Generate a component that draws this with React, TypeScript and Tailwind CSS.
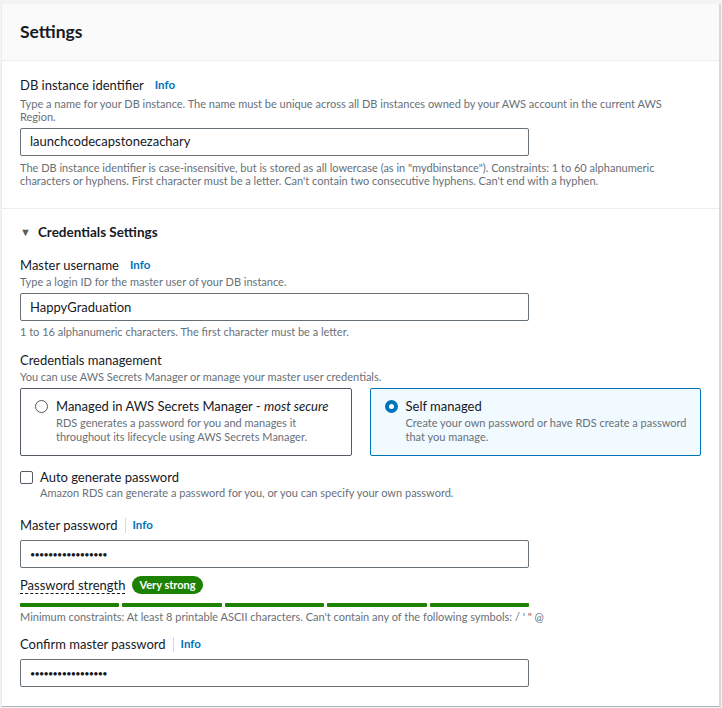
const font = { fontFamily: "Lato, 'Liberation Sans', sans-serif" };

function Info() {
  return <span className="text-[11.5px] font-bold text-[#0073bb]">Info</span>;
}

function Label({ text, divider = false }: { text: string; divider?: boolean }) {
  return (
    <div className="flex items-center text-[13px] leading-[20px] text-[#16191f]">
      <span>{text}</span>
      {divider ? (
        <span className="mx-[7px] h-[15px] w-px bg-[#d5dbdb]" />
      ) : (
        <span className="w-[11px]" />
      )}
      <Info />
    </div>
  );
}

function Hint({ children }: { children: React.ReactNode }) {
  return <p className="text-[11px] leading-[13px] text-[#687078]">{children}</p>;
}

function TextBox({ value }: { value: string }) {
  return (
    <div className="flex h-[28px] w-[509px] items-center rounded-[2px] border border-[#687078] bg-white px-[9px] text-[13px] text-[#16191f]">
      {value}
    </div>
  );
}

function Dots() {
  return (
    <div className="flex h-[28px] w-[509px] items-center rounded-[2px] border border-[#687078] bg-white px-[9px]">
      <span className="text-[9px] tracking-[-0.7px] text-[#16191f]">•••••••••••••••••</span>
    </div>
  );
}

export default function App() {
  return (
    <div style={font} className="min-h-[708px] bg-[#f2f3f3] pt-[4px] pl-[1px] pr-[1px]">
      <div className="border-l border-[#eaeded] border-r-2 border-r-[#d5dbdb] border-b border-b-[#aab7b8] bg-white">
        <div className="flex h-[57px] items-center border-b border-[#eaeded] bg-[#fafafa] px-[18px]">
          <h2 className="text-[17.5px] font-bold text-[#16191f]">Settings</h2>
        </div>

        <div className="px-[18px] pt-[14px] pb-[21px]">
          <Label text="DB instance identifier" />
          <div className="mt-[2px] w-[650px]">
            <Hint>
              Type a name for your DB instance. The name must be unique across all DB instances owned by your AWS account in the current AWS Region.
            </Hint>
          </div>
          <div className="mt-[5px]">
            <TextBox value="launchcodecapstonezachary" />
          </div>
          <div className="mt-[5px] w-[650px]">
            <Hint>
              The DB instance identifier is case-insensitive, but is stored as all lowercase (as in "mydbinstance"). Constraints: 1 to 60 alphanumeric characters or hyphens. First character must be a letter. Can't contain two consecutive hyphens. Can't end with a hyphen.
            </Hint>
          </div>
        </div>

        <div className="border-t border-[#eaeded] px-[18px] pt-[13px] pb-[19px]">
          <div className="flex items-center gap-[7px] text-[13.5px] font-bold text-[#16191f]">
            <span className="text-[11px] text-[#545b64]">▼</span>
            <span>Credentials Settings</span>
          </div>

          <div className="mt-[13px]">
            <Label text="Master username" />
            <div>
              <Hint>Type a login ID for the master user of your DB instance.</Hint>
            </div>
            <div className="mt-[5px]">
              <TextBox value="HappyGraduation" />
            </div>
            <div className="mt-[4px]">
              <Hint>1 to 16 alphanumeric characters. The first character must be a letter.</Hint>
            </div>
          </div>

          <div className="mt-[12px]">
            <div className="text-[13px] leading-[20px] text-[#16191f]">Credentials management</div>
            <div>
              <Hint>You can use AWS Secrets Manager or manage your master user credentials.</Hint>
            </div>
            <div className="mt-[5px] grid grid-cols-2 gap-[18px]">
              <div className="flex h-[68px] gap-[8px] rounded-[2px] border border-[#545b64] px-[14px] pt-[8px]">
                <span className="mt-[3px] h-[13px] w-[13px] shrink-0 rounded-full border border-[#545b64]" />
                <div>
                  <div className="text-[13px] leading-[18px] text-[#16191f]">
                    Managed in AWS Secrets Manager - <i>most secure</i>
                  </div>
                  <div className="mt-[1px] w-[262px] text-[11px] leading-[14px] text-[#687078]">
                    RDS generates a password for you and manages it throughout its lifecycle using AWS Secrets Manager.
                  </div>
                </div>
              </div>
              <div className="flex h-[68px] gap-[8px] rounded-[2px] border border-[#0073bb] bg-[#f1faff] px-[14px] pt-[8px]">
                <span className="mt-[3px] flex h-[13px] w-[13px] shrink-0 items-center justify-center rounded-full bg-[#0073bb]">
                  <span className="h-[5px] w-[5px] rounded-full bg-white" />
                </span>
                <div>
                  <div className="text-[13px] leading-[18px] text-[#16191f]">Self managed</div>
                  <div className="mt-[1px] w-[288px] text-[11px] leading-[14px] text-[#687078]">
                    Create your own password or have RDS create a password that you manage.
                  </div>
                </div>
              </div>
            </div>
          </div>

          <div className="mt-[13px] flex gap-[7px]">
            <span className="mt-[2px] h-[13px] w-[13px] shrink-0 rounded-[2px] border border-[#545b64]" />
            <div>
              <div className="text-[13px] leading-[16px] text-[#16191f]">Auto generate password</div>
              <div className="mt-[1px]">
                <Hint>Amazon RDS can generate a password for you, or you can specify your own password.</Hint>
              </div>
            </div>
          </div>

          <div className="mt-[16px]">
            <Label text="Master password" divider />
            <div className="mt-[5px]">
              <Dots />
            </div>
            <div className="mt-[8px] flex items-center gap-[7px]">
              <span className="border-b border-dashed border-[#16191f] text-[13px] leading-[16px] text-[#16191f]">
                Password strength
              </span>
              <span className="rounded-full bg-[#1d8102] px-[7px] text-[11px] font-bold leading-[18px] text-white">
                Very strong
              </span>
            </div>
            <div className="mt-[9px] grid w-[509px] grid-cols-5 gap-[3px]">
              {[0, 1, 2, 3, 4].map((i) => (
                <span key={i} className="h-[4px] rounded-[1px] bg-[#1d8102]" />
              ))}
            </div>
            <div className="mt-[3px]">
              <Hint>Minimum constraints: At least 8 printable ASCII characters. Can't contain any of the following symbols: / ' " @</Hint>
            </div>
          </div>

          <div className="mt-[11px]">
            <Label text="Confirm master password" divider />
            <div className="mt-[5px]">
              <Dots />
            </div>
          </div>
        </div>
      </div>
    </div>
  );
}
